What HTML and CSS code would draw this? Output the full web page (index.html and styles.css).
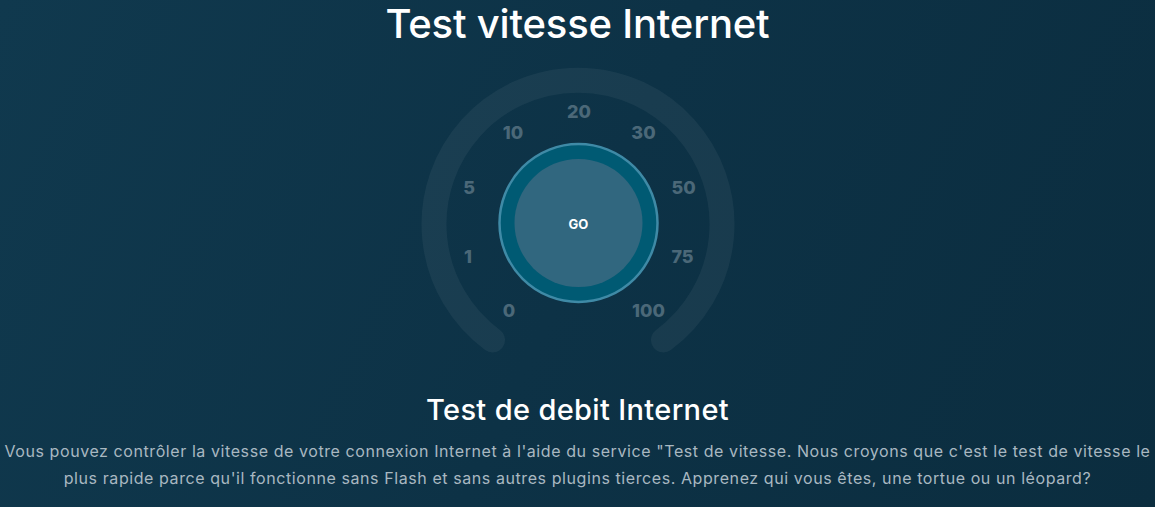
FILE: index.html
```html
<!DOCTYPE html>
<html lang="fr">
<head>
<meta charset="utf-8">
<title>Test vitesse Internet</title>
<link rel="stylesheet" href="styles.css">
</head>
<body>
<main class="page">
  <h1 class="title">Test vitesse Internet</h1>
  <div class="gauge-wrap">
    <svg class="gauge" width="340" height="304" viewBox="407.5 56 340 304" xmlns="http://www.w3.org/2000/svg">
      <path class="gauge-arc" d="M 492 340 A 144 144 0 1 1 663 340" />
      <g class="gauge-labels">
        <text x="578.5" y="111.5">20</text>
        <text x="512.5" y="132.5">10</text>
        <text x="643" y="132.5">30</text>
        <text x="468.5" y="187.5">5</text>
        <text x="683" y="187.5">50</text>
        <text x="467.5" y="256">1</text>
        <text x="682" y="256">75</text>
        <text x="508.5" y="310.5">0</text>
        <text x="648" y="310.5">100</text>
      </g>
      <circle class="ring" cx="578" cy="223" r="79" />
      <circle class="core" cx="578" cy="223" r="64" />
      <text class="go" x="578" y="224">GO</text>
    </svg>
  </div>
  <h2 class="subtitle">Test de debit Internet</h2>
  <p class="desc">Vous pouvez contrôler la vitesse de votre connexion Internet à l'aide du service "Test de vitesse. Nous croyons que c'est le test de vitesse le plus rapide parce qu'il fonctionne sans Flash et sans autres plugins tierces. Apprenez qui vous êtes, une tortue ou un léopard?</p>
</main>
</body>
</html>
```
FILE: styles.css
```css
html, body {
  margin: 0;
  padding: 0;
}
body {
  background: linear-gradient(115deg, #10394e 0%, #0d3246 50%, #0b2d3f 100%);
  min-height: 507px;
  font-family: Inter, "Liberation Sans", sans-serif;
  color: #ffffff;
  overflow: hidden;
}
.page {
  display: flex;
  flex-direction: column;
  align-items: center;
  text-align: center;
}
.title {
  margin: 0 0 8px;
  font-size: 40px;
  line-height: 48px;
  font-weight: 500;
  letter-spacing: -0.2px;
}
.gauge-wrap {
  display: flex;
  justify-content: center;
  width: 100%;
}
.gauge {
  display: block;
}
.gauge-arc {
  fill: none;
  stroke: rgba(255, 255, 255, 0.05);
  stroke-width: 25;
  stroke-linecap: round;
}
.gauge-labels text {
  fill: #4b6878;
  font-family: Inter, "Liberation Sans", sans-serif;
  font-weight: 800;
  font-size: 18px;
  text-anchor: middle;
  dominant-baseline: central;
}
.ring {
  fill: #005a73;
  stroke: #3f8aa6;
  stroke-width: 2.5;
}
.core {
  fill: #31677f;
}
.go {
  fill: #ffffff;
  font-family: Inter, "Liberation Sans", sans-serif;
  font-weight: 700;
  font-size: 13px;
  text-anchor: middle;
  dominant-baseline: central;
}
.subtitle {
  margin: 32px 0 10px;
  font-size: 29px;
  line-height: 36px;
  font-weight: 500;
  letter-spacing: 0.35px;
}
.desc {
  margin: 0;
  padding: 0 2px;
  font-size: 16px;
  line-height: 27px;
  letter-spacing: 0.58px;
  color: #a9b8c1;
}
```
